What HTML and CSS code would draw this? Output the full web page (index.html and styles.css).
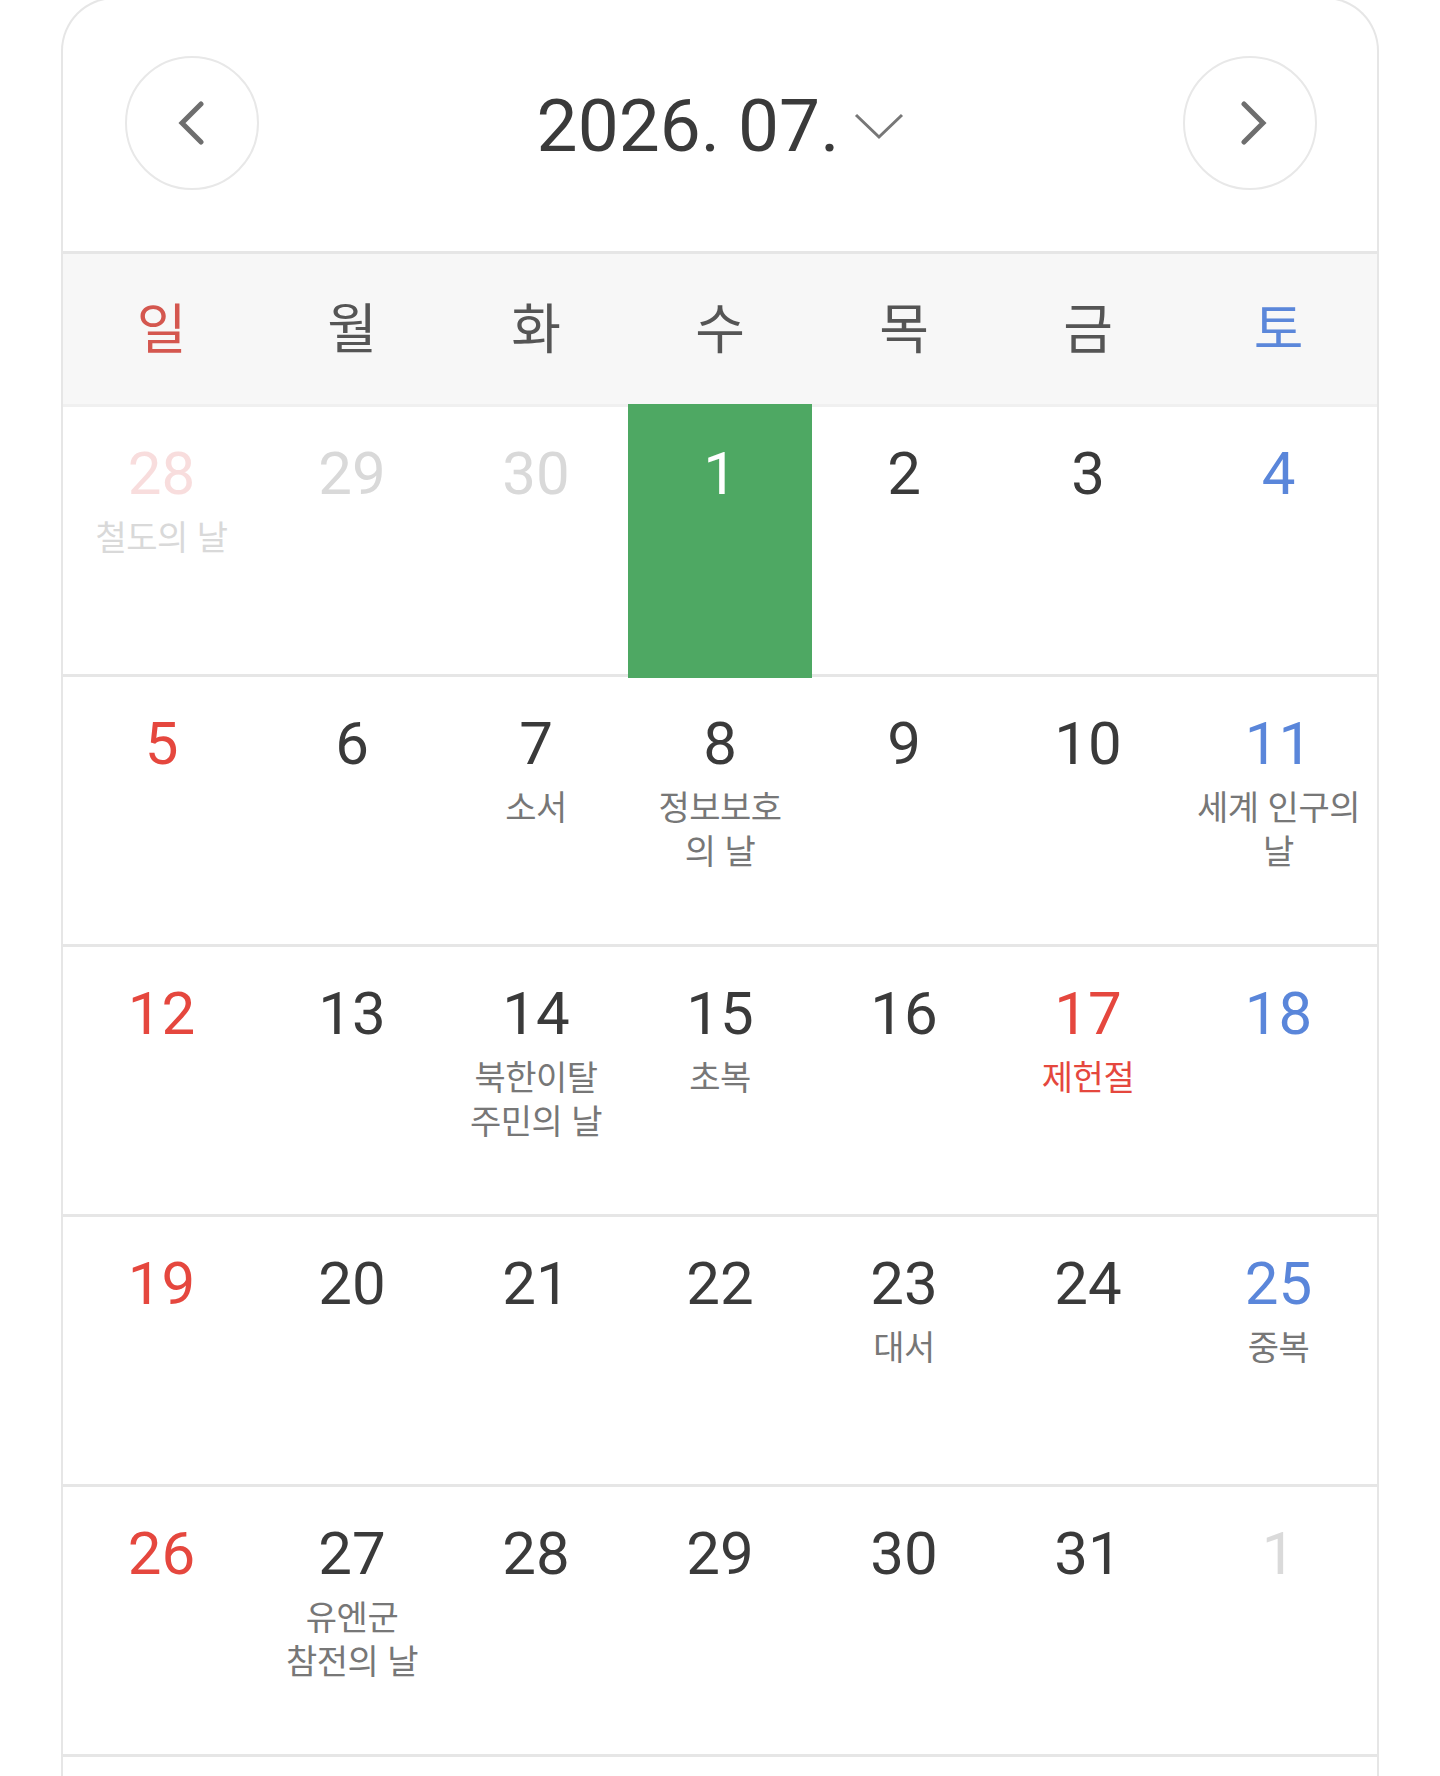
FILE: index.html
```html
<!DOCTYPE html>
<html lang="ko">

<head>
  <meta charset="UTF-8">
  <title>달력</title>
  <link rel="stylesheet" href="styles.css">
</head>

<body>

  <div class="calendar">

    <!-- 상단 월 이동 -->
    <div class="cal-header">
      <button class="nav-btn prev" type="button" aria-label="이전 달">
        <svg width="40" height="44" viewBox="0 0 40 44"><path d="M29 3 L10 22 L29 41" /></svg>
      </button>
      <div class="cal-title">
        <span class="title-text">2026. 07.</span>
        <svg class="caret" width="52" height="28" viewBox="0 0 52 28"><path d="M3 3 L26 25 L49 3" /></svg>
      </div>
      <button class="nav-btn next" type="button" aria-label="다음 달">
        <svg width="40" height="44" viewBox="0 0 40 44"><path d="M14 3 L33 22 L14 41" /></svg>
      </button>
    </div>

    <!-- 요일 -->
    <div class="weekdays">
      <div class="wd sun">일</div>
      <div class="wd">월</div>
      <div class="wd">화</div>
      <div class="wd">수</div>
      <div class="wd">목</div>
      <div class="wd">금</div>
      <div class="wd sat">토</div>
    </div>

    <!-- 날짜 -->
    <div class="week">
      <div class="day sun other"><div class="num">28</div><div class="label">철도의 날</div></div>
      <div class="day other"><div class="num">29</div></div>
      <div class="day other"><div class="num">30</div></div>
      <div class="day today"><div class="num">1</div></div>
      <div class="day"><div class="num">2</div></div>
      <div class="day"><div class="num">3</div></div>
      <div class="day sat"><div class="num">4</div></div>
    </div>

    <div class="week">
      <div class="day sun"><div class="num">5</div></div>
      <div class="day"><div class="num">6</div></div>
      <div class="day"><div class="num">7</div><div class="label">소서</div></div>
      <div class="day"><div class="num">8</div><div class="label">정보보호<br>의 날</div></div>
      <div class="day"><div class="num">9</div></div>
      <div class="day"><div class="num">10</div></div>
      <div class="day sat"><div class="num">11</div><div class="label">세계 인구의<br>날</div></div>
    </div>

    <div class="week">
      <div class="day sun"><div class="num">12</div></div>
      <div class="day"><div class="num">13</div></div>
      <div class="day"><div class="num">14</div><div class="label">북한이탈<br>주민의 날</div></div>
      <div class="day"><div class="num">15</div><div class="label">초복</div></div>
      <div class="day"><div class="num">16</div></div>
      <div class="day holiday"><div class="num">17</div><div class="label">제헌절</div></div>
      <div class="day sat"><div class="num">18</div></div>
    </div>

    <div class="week">
      <div class="day sun"><div class="num">19</div></div>
      <div class="day"><div class="num">20</div></div>
      <div class="day"><div class="num">21</div></div>
      <div class="day"><div class="num">22</div></div>
      <div class="day"><div class="num">23</div><div class="label">대서</div></div>
      <div class="day"><div class="num">24</div></div>
      <div class="day sat"><div class="num">25</div><div class="label">중복</div></div>
    </div>

    <div class="week">
      <div class="day sun"><div class="num">26</div></div>
      <div class="day"><div class="num">27</div><div class="label">유엔군<br>참전의 날</div></div>
      <div class="day"><div class="num">28</div></div>
      <div class="day"><div class="num">29</div></div>
      <div class="day"><div class="num">30</div></div>
      <div class="day"><div class="num">31</div></div>
      <div class="day sat other"><div class="num">1</div></div>
    </div>

  </div>

</body>

</html>
```

FILE: styles.css
```css
* {
  box-sizing: border-box;
}

body {
  margin: 0;
  background: #fff;
  font-family: Roboto, "Noto Sans CJK KR", sans-serif;
  color: #3a3a3a;
  overflow: hidden;
}

.calendar {
  margin: -3px 61px 0;
  padding-bottom: 60px;
  border: 2px solid #e6e6e6;
  border-bottom: 0;
  border-radius: 54px 54px 0 0;
  background: #fff;
}

/* header */
.cal-header {
  display: flex;
  align-items: center;
  justify-content: space-between;
  height: 255px;
  padding: 0 60px 4px 62px;
  border-bottom: 3px solid #e6e6e6;
}

.nav-btn {
  display: flex;
  align-items: center;
  justify-content: center;
  width: 134px;
  height: 134px;
  padding: 0;
  border: 2px solid #e8e8e8;
  border-radius: 50%;
  background: #fff;
  cursor: pointer;
}

.nav-btn path {
  fill: none;
  stroke: #6e6e6e;
  stroke-width: 5;
  stroke-linecap: round;
}

.cal-title {
  display: flex;
  align-items: center;
  padding-top: 6px;
}

.title-text {
  font-family: Roboto, sans-serif;
  font-size: 73px;
  line-height: 80px;
  color: #3a3a3a;
}

.caret {
  margin-left: 14px;
}

.caret path {
  fill: none;
  stroke: #777;
  stroke-width: 3;
}

/* weekdays */
.weekdays,
.week {
  display: grid;
  grid-template-columns: 197px repeat(5, 184px) 197px;
}

.weekdays {
  height: 153px;
  background: #f7f7f7;
  border-bottom: 3px solid #f0f0f0;
}

.wd {
  display: flex;
  align-items: center;
  justify-content: center;
  font-family: "Noto Sans CJK KR", sans-serif;
  font-size: 54px;
  color: #555;
  padding-bottom: 7px;
}

.wd.sun {
  color: #d4574f;
}

.wd.sat {
  color: #5b87da;
}

/* weeks */
.week {
  height: 270px;
  border-bottom: 3px solid #e6e6e6;
}

.day {
  text-align: center;
  padding-top: 34px;
}

.num {
  font-family: Roboto, sans-serif;
  font-size: 60px;
  line-height: 66px;
  color: #3a3a3a;
}

.label {
  margin-top: 7px;
  font-family: "Noto Sans CJK KR", sans-serif;
  font-size: 34px;
  line-height: 44px;
  letter-spacing: -0.5px;
  color: #777;
}

.day.sun .num,
.day.holiday .num,
.day.holiday .label {
  color: #e5473e;
}

.day.sat .num {
  color: #5a86da;
}

.day.other .num,
.day.other .label {
  color: #d9d9d9;
}

.day.sun.other .num {
  color: #f8dddd;
}

.day.sat.other .num {
  color: #dadada;
}

.day.today {
  margin: -3px 0 -4px;
  padding-top: 37px;
  background: #4ea863;
}

.day.today .num {
  color: #fff;
}
```
